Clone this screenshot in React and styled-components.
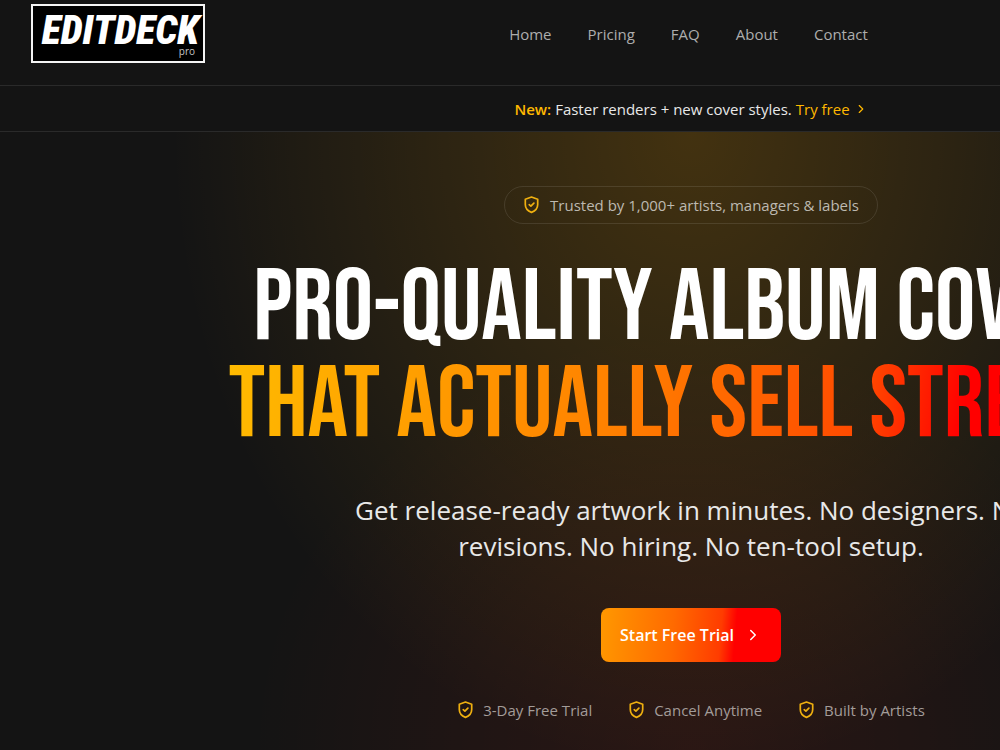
import React from "react";
import styled, { createGlobalStyle } from "styled-components";
import { ChevronRight } from "lucide-react";

const Global = createGlobalStyle`
  *, *::before, *::after { box-sizing: border-box; }
  html, body { margin: 0; background: #141414; overflow-x: hidden; }
  body {
    font-family: "Open Sans", "Noto Sans", sans-serif;
    font-size: 15px;
    color: #e8e8e8;
  }
  h1, p, ul { margin: 0; padding: 0; }
  a { color: inherit; text-decoration: none; }
`;

const Page = styled.div`
  min-width: 1382px;
  min-height: 100vh;
  display: flex;
  flex-direction: column;
`;

const Header = styled.header`
  display: grid;
  grid-template-columns: 1fr auto 1fr;
  align-items: center;
  padding: 4px 36px 22px 31px;
  border-bottom: 1px solid #2a2a2a;
`;

const Logo = styled.a`
  justify-self: start;
  display: flex;
  flex-direction: column;
  align-items: flex-end;
  width: 174px;
  height: 59px;
  padding: 9px 4px 0 0;
  border: 2px solid #f4f4f4;
  background: #000;
  color: #fff;
`;

const LogoWord = styled.span`
  font: italic 900 40px/32px "Roboto Condensed", "Lato", sans-serif;
`;

const LogoSub = styled.span`
  padding-right: 4px;
  font-size: 10px;
  line-height: 8px;
  color: #c4c4c4;
`;

const Nav = styled.nav`
  display: flex;
  gap: 36px;
  line-height: 24px;
  color: #adadad;
`;

const Banner = styled.p`
  display: flex;
  justify-content: center;
  align-items: center;
  gap: 4px;
  height: 46px;
  border-bottom: 1px solid #2a2a2a;
`;

const BannerTag = styled.strong`
  font-weight: 600;
  color: #ffb800;
`;

const BannerLink = styled.a`
  display: flex;
  align-items: center;
  gap: 4px;
  color: #ffb800;
`;

const Hero = styled.main`
  flex: 1;
  display: flex;
  flex-direction: column;
  align-items: center;
  padding: 54px 24px 28px;
  background:
    radial-gradient(ellipse 520px 640px at 50% 0, rgba(255, 170, 0, 0.2), rgba(255, 170, 0, 0.1) 50%, transparent),
    radial-gradient(ellipse 440px 420px at 50% 100%, rgba(255, 40, 20, 0.09), rgba(255, 40, 20, 0.05) 50%, transparent),
    #141414;
`;

const Pill = styled.div`
  display: flex;
  align-items: center;
  gap: 10px;
  height: 38px;
  padding: 0 18px;
  border: 1px solid rgba(255, 255, 255, 0.1);
  border-radius: 19px;
  color: #bdb9b0;
`;

const Headline = styled.h1`
  margin-top: 36px;
  font: 400 101px/97px "Bebas Neue", "Roboto Condensed", sans-serif;
  text-align: center;
  text-transform: uppercase;
  color: #fff;
`;

const Accent = styled.span`
  display: block;
  background: linear-gradient(100deg, #ffbb00, #ff8000 42%, #ff4a00 68%, #ff0000 79%);
  background-clip: text;
  -webkit-background-clip: text;
  color: transparent;
`;

const Lead = styled.p`
  max-width: 700px;
  margin-top: 38px;
  font-size: 26px;
  line-height: 36px;
  text-align: center;
`;

const Cta = styled.button`
  display: flex;
  align-items: center;
  gap: 10px;
  height: 54px;
  margin-top: 44px;
  padding: 0 19px;
  border: 0;
  border-radius: 8px;
  background: linear-gradient(95deg, #ff9800, #ff6a00 40%, #ff3c00 66%, #ff0000 74%);
  color: #fff;
  font: 600 16px/24px "Open Sans", "Noto Sans", sans-serif;
`;

const Perks = styled.ul`
  display: flex;
  gap: 36px;
  margin-top: 36px;
  list-style: none;
  color: #a39c99;
`;

const Perk = styled.li`
  display: flex;
  align-items: center;
  gap: 9px;
  line-height: 24px;
`;

const ShieldSvg = styled.svg`
  flex: none;
  width: 17px;
  height: 18px;
  fill: none;
  stroke: #efb010;
  stroke-width: 1.7;
  stroke-linejoin: round;
  stroke-linecap: round;
`;

const Shield = () => (
  <ShieldSvg viewBox="0 0 17 18" aria-hidden="true">
    <path d="M8.500 1 14.700 3.200v5.400c0 4-2.600 6.500-6.200 7.800C4.900 15.100 2.300 12.600 2.300 8.600V3.200Z" />
    <path d="m6.200 8.700 1.700 1.500 3-3" />
  </ShieldSvg>
);

const links = ["Home", "Pricing", "FAQ", "About", "Contact"];
const perks = ["3-Day Free Trial", "Cancel Anytime", "Built by Artists"];

export default function App() {
  return (
    <>
      <Global />
      <Page>
        <Header>
          <Logo href="#home">
            <LogoWord>EDITDECK</LogoWord>
            <LogoSub>pro</LogoSub>
          </Logo>
          <Nav>
            {links.map((l) => (
              <a key={l} href={`#${l.toLowerCase()}`}>{l}</a>
            ))}
          </Nav>
        </Header>
        <Banner>
          <BannerTag>New:</BannerTag>
          <span>Faster renders + new cover styles.</span>
          <BannerLink href="#trial">
            Try free <ChevronRight size={14} />
          </BannerLink>
        </Banner>
        <Hero>
          <Pill>
            <Shield />
            Trusted by 1,000+ artists, managers &amp; labels
          </Pill>
          <Headline>
            Pro-Quality Album Covers
            <Accent>That Actually Sell Streams</Accent>
          </Headline>
          <Lead>
            Get release-ready artwork in minutes. No designers. No revisions. No hiring. No ten-tool setup.
          </Lead>
          <Cta type="button">
            Start Free Trial <ChevronRight size={18} />
          </Cta>
          <Perks>
            {perks.map((p) => (
              <Perk key={p}>
                <Shield />
                {p}
              </Perk>
            ))}
          </Perks>
        </Hero>
      </Page>
    </>
  );
}
